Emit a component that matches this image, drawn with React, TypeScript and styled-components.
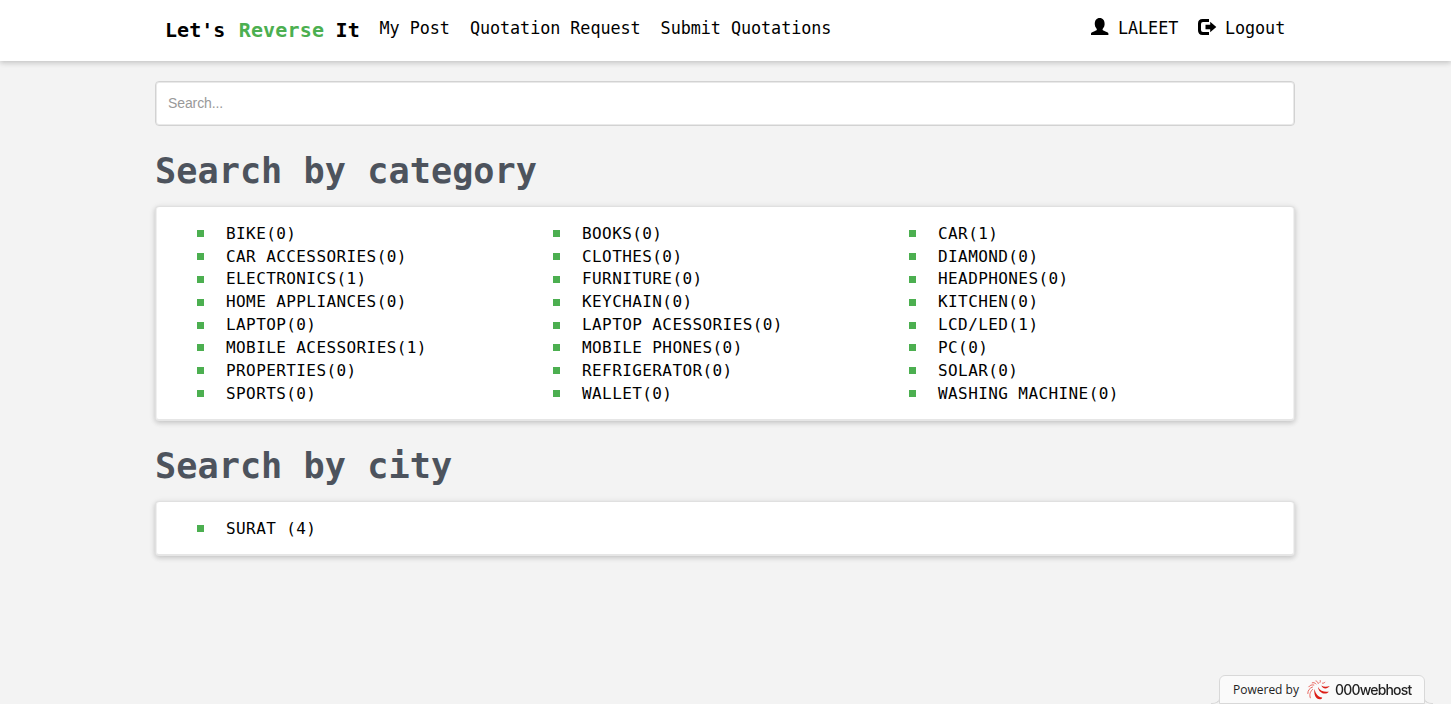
import React from "react";
import styled, { createGlobalStyle } from "styled-components";

const GlobalStyle = createGlobalStyle`
  * { box-sizing: border-box; }
  body {
    margin: 0;
    background: #f3f3f3;
    color: #000;
    font-family: "DejaVu Sans Mono", monospace;
    font-size: 16px;
    line-height: 1.42857;
  }
`;

const shadow = "0 2px 5px rgba(0, 0, 0, 0.14), 0 1px 7px rgba(0, 0, 0, 0.08)";

const Page = styled.div`
  min-height: 704px;
  display: flex;
  flex-direction: column;
  align-items: center;
`;

const Header = styled.header`
  width: 100%;
  height: 61px;
  padding-right: 1px;
  background: #fff;
  box-shadow: ${shadow};
  display: flex;
  justify-content: center;
`;

const Nav = styled.nav`
  width: 1140px;
  height: 61px;
  padding: 0 10px;
  display: flex;
  align-items: flex-start;
`;

const Brand = styled.a`
  margin-right: 19.8px;
  padding-top: 16px;
  font-size: 20px;
  line-height: 28px;
  font-weight: bold;
  letter-spacing: 0.04px;
  white-space: pre;
`;

const Accent = styled.span`
  margin-left: 1.2px;
  margin-right: -0.6px;
  color: #4caf50;
  letter-spacing: 0.16px;
`;

const NavLink = styled.a`
  margin-right: 20px;
  padding-top: 16px;
  display: flex;
  font-size: 16.8px;
  line-height: 24px;
  letter-spacing: -0.06px;
  white-space: pre;
`;

const Account = styled.div`
  margin-left: auto;
  margin-right: -20.2px;
  display: flex;
  & > a:first-child { margin-right: 18.7px; }
`;

const NavIcon = styled.svg`
  width: 20px;
  height: 20px;
  margin: 1px 8px 0 0;
  fill: #000;
`;

const Main = styled.main`
  width: 1141px;
  padding: 20px 1px 0 0;
  display: flex;
  flex-direction: column;
`;

const Search = styled.input`
  height: 45px;
  padding: 6px 12px 7px;
  border: 1px solid #d2d2d2;
  border-radius: 4px;
  background: #fff;
  box-shadow: inset 0 0 0 1px #e9e9e9;
  font: 14px "Liberation Sans", Arial, sans-serif;
  letter-spacing: -0.1px;
  outline: none;
  &::placeholder { color: #999; opacity: 1; }
`;

const Heading = styled.h1`
  margin: 20px 0 10px;
  color: #4d535d;
  font-size: 35.2px;
  line-height: 50px;
  font-weight: bold;
  letter-spacing: 0.04px;
`;

const Card = styled.section`
  border: 1px solid #e0e0e0;
  border-bottom: 2px solid #e6e6e6;
  border-radius: 4px;
  background: #fff;
  box-shadow: ${shadow}, inset 1px 0 0 #f0f0f0, inset -1px 0 0 #f0f0f0;
  padding: 15.8px 0 13.3px 41px;
`;

const List = styled.ul`
  margin: 0;
  padding: 0;
  list-style: none;
  display: grid;
  grid-template-columns: repeat(3, 356px);
`;

const Item = styled.li`
  height: 22.857px;
  display: flex;
  align-items: center;
  line-height: 22.857px;
  letter-spacing: 0.41px;
  white-space: pre;
  &::before {
    content: "";
    width: 7px;
    height: 7px;
    margin: 0 22px 1px 0;
    background: #4caf50;
  }
`;

const HostBadge = styled.a`
  position: fixed;
  right: 26px;
  bottom: 0;
  width: 206px;
  height: 29px;
  padding: 0 12px 0 13px;
  border: 1px solid #d8d8d8;
  border-radius: 6px 6px 0 0;
  background: #fafafa;
  display: flex;
  align-items: center;
  color: #222;
  font: 12px "Open Sans", sans-serif;
  white-space: nowrap;

  &::before,
  &::after {
    content: "";
    position: absolute;
    bottom: -1px;
    width: 8px;
    height: 6px;
    border-bottom: 1px solid #d8d8d8;
  }
  &::before {
    right: 100%;
    border-right: 1px solid #d8d8d8;
    border-bottom-right-radius: 8px 5px;
  }
  &::after {
    left: 100%;
    border-left: 1px solid #d8d8d8;
    border-bottom-left-radius: 8px 5px;
  }
`;

const HostLogo = styled.svg`
  width: 23px;
  height: 20px;
  margin: 0 5px 0 8px;
  flex: none;
`;

const HostName = styled.span`
  font-family: Inter, sans-serif;
  font-size: 14px;
  font-weight: 500;
  letter-spacing: -0.8px;
`;

const categories = [
  "BIKE(0)", "BOOKS(0)", "CAR(1)",
  "CAR ACCESSORIES(0)", "CLOTHES(0)", "DIAMOND(0)",
  "ELECTRONICS(1)", "FURNITURE(0)", "HEADPHONES(0)",
  "HOME APPLIANCES(0)", "KEYCHAIN(0)", "KITCHEN(0)",
  "LAPTOP(0)", "LAPTOP ACESSORIES(0)", "LCD/LED(1)",
  "MOBILE ACESSORIES(1)", "MOBILE PHONES(0)", "PC(0)",
  "PROPERTIES(0)", "REFRIGERATOR(0)", "SOLAR(0)",
  "SPORTS(0)", "WALLET(0)", "WASHING MACHINE(0)",
];

export default function App() {
  return (
    <Page>
      <GlobalStyle />
      <Header>
        <Nav>
          <Brand>Let's <Accent>Reverse</Accent> It</Brand>
          <NavLink>My Post</NavLink>
          <NavLink>Quotation Request</NavLink>
          <NavLink>Submit Quotations</NavLink>
          <Account>
            <NavLink>
              <NavIcon viewBox="0 0 20 20">
                <path d="M1 18v-1.400c0-1 2-1.600 3.500-2.300 1.300-.6 2.100-.9 2.300-1.500.2-.6-.2-1.100-.7-1.800-.8-1-1.200-2.300-1.300-3.600C4.600 3.300 6.600 1 9.700 1s5.100 2.300 4.900 6.400c-.1 1.300-.5 2.600-1.300 3.600-.5.7-.9 1.200-.7 1.800.2.6 1 .9 2.300 1.500 1.500.7 3.500 1.300 3.500 2.300V18z" />
              </NavIcon>
              LALEET
            </NavLink>
            <NavLink>
              <NavIcon viewBox="0 0 20 20">
                <path d="M12 2H5.500Q1 2 1 6.500v6.800Q1 18 5.500 18H12v-3H6q-2 0-2-2V7q0-2 2-2h6z" />
                <path d="M8.500 7.800h4.700V4.800l6.100 5.200-6.100 5.200v-3H8.500z" />
              </NavIcon>
              Logout
            </NavLink>
          </Account>
        </Nav>
      </Header>
      <Main>
        <Search placeholder="Search..." />
        <Heading>Search by category</Heading>
        <Card>
          <List>{categories.map((name) => <Item key={name}>{name}</Item>)}</List>
        </Card>
        <Heading>Search by city</Heading>
        <Card>
          <List><Item>SURAT (4)</Item></List>
        </Card>
      </Main>
      <HostBadge>
        Powered by
        <HostLogo viewBox="0 0 23 20">
          <g fill="#dc1f17">
            <path d="M7.500 9C6.500 14.500 9 19.800 13.500 19.300c1-.3 1.500-1 1.700-1.900C11.500 17.500 8.500 14 7.500 9z" />
            <path d="M11 7C11.500 12 16 14.500 20 13.300c1-.4 1.400-1 1.600-1.700C17.500 12.300 13 11 11 7z" />
            <path d="M14.300 5.500c1.500 3.300 5.500 4.200 8.500 .5-3 .9-6 1-8.500-.5z" />
          </g>
          <g fill="none" stroke="#e5564d" strokeWidth="0.900" strokeLinecap="round">
            <path d="M5.500 9.500C2.800 12 2.300 15 3.300 17.800" />
            <path d="M5.500 7C2.500 8 .8 10.500 .8 13.500" />
            <path d="M6.800 5C4.500 4.500 2.800 5.300 1.800 6.800" />
            <path d="M9 4C8 2.700 6.500 2.300 5.200 2.800" />
            <path d="M11.300 3.500C11 2.200 10.200 1.300 9 1" />
            <path d="M13 2.500c.4-.6.500-1.200.3-1.900" />
            <path d="M15.500 3.200c1 .1 1.900-.2 2.400-1" />
          </g>
        </HostLogo>
        <HostName>000webhost</HostName>
      </HostBadge>
    </Page>
  );
}
